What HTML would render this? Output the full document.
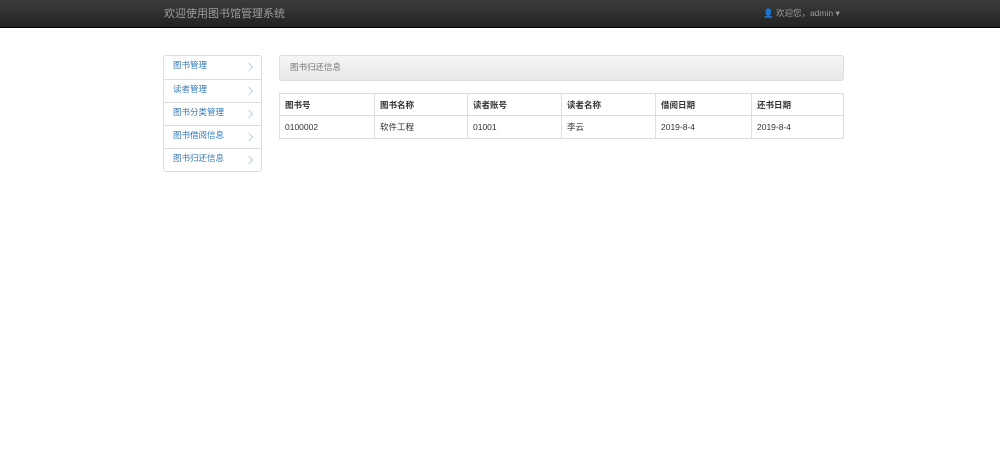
<!DOCTYPE html>
<html><head><meta charset="utf-8"><style>
*{box-sizing:border-box;margin:0;padding:0}
body{width:1000px;height:457px;background:#fff;font-family:"Liberation Sans","Noto Sans CJK SC",sans-serif;font-size:9px;color:#333;position:relative;overflow:hidden}
.nav{position:absolute;left:0;top:0;width:1000px;height:28px;background:linear-gradient(#3c3c3c,#222);border-bottom:1px solid #000}
.brand{position:absolute;left:164px;top:5px;color:#9d9d9d;font-size:11px}
.user{position:absolute;left:763px;top:7px;color:#9d9d9d;font-size:8.5px}
.side{position:absolute;left:163px;top:55px;width:99px;border:1px solid #ddd;border-radius:3px;background:#fff}
.side div{height:23px;line-height:19px;padding-left:9px;color:#337ab7;font-size:8.5px;border-top:1px solid #ddd;position:relative}
.side div:first-child{border-top:none}
.side div:after{content:"";position:absolute;right:9px;top:8px;width:5px;height:5px;border-right:1.5px solid #bcd3e6;border-top:1.5px solid #bcd3e6;transform:rotate(45deg)}
.head{position:absolute;left:279px;top:55px;width:565px;height:26px;border:1px solid #ddd;border-radius:3px;background:linear-gradient(#f5f5f5,#e8e8e8);color:#777;font-size:8.5px;padding:5px 0 0 10px}
table{position:absolute;left:279px;top:93px;width:565px;border-collapse:collapse}
td,th{border:1px solid #ddd;height:23px;padding:0 5px;text-align:left;font-size:8.5px}
th{font-weight:bold;height:22px}
</style></head><body>
<div class="nav"><div class="brand">欢迎使用图书馆管理系统</div><div class="user">&#128100; 欢迎您，admin ▾</div></div>
<div class="side"><div>图书管理</div><div>读者管理</div><div>图书分类管理</div><div>图书借阅信息</div><div>图书归还信息</div></div>
<div class="head">图书归还信息</div>
<table><tr><th style="width:95px">图书号</th><th style="width:93px">图书名称</th><th style="width:94px">读者账号</th><th style="width:94px">读者名称</th><th style="width:96px">借阅日期</th><th>还书日期</th></tr>
<tr><td>0100002</td><td>软件工程</td><td>01001</td><td>李云</td><td>2019-8-4</td><td>2019-8-4</td></tr></table>
</body></html>
